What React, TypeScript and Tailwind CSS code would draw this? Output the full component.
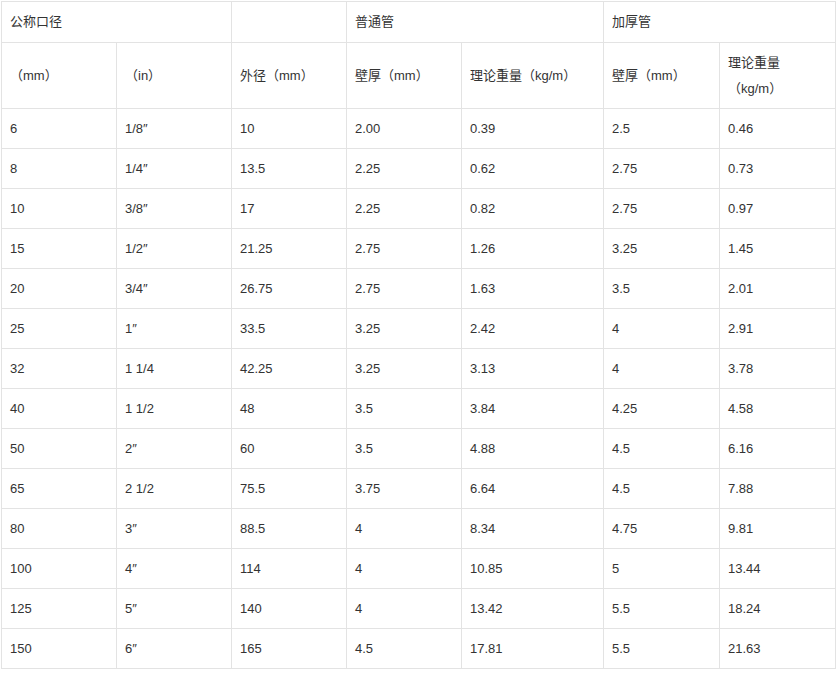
import React from 'react';

// ── Data ───────────────────────────────────────────────────────────────────────

const ROWS: string[][] = [
  ['6', '1/8″', '10', '2.00', '0.39', '2.5', '0.46'],
  ['8', '1/4″', '13.5', '2.25', '0.62', '2.75', '0.73'],
  ['10', '3/8″', '17', '2.25', '0.82', '2.75', '0.97'],
  ['15', '1/2″', '21.25', '2.75', '1.26', '3.25', '1.45'],
  ['20', '3/4″', '26.75', '2.75', '1.63', '3.5', '2.01'],
  ['25', '1″', '33.5', '3.25', '2.42', '4', '2.91'],
  ['32', '1 1/4', '42.25', '3.25', '3.13', '4', '3.78'],
  ['40', '1 1/2', '48', '3.5', '3.84', '4.25', '4.58'],
  ['50', '2″', '60', '3.5', '4.88', '4.5', '6.16'],
  ['65', '2 1/2', '75.5', '3.75', '6.64', '4.5', '7.88'],
  ['80', '3″', '88.5', '4', '8.34', '4.75', '9.81'],
  ['100', '4″', '114', '4', '10.85', '5', '13.44'],
  ['125', '5″', '140', '4', '13.42', '5.5', '18.24'],
  ['150', '6″', '165', '4.5', '17.81', '5.5', '21.63'],
];

const cell = 'border border-[#e3e3e3] px-[8px] py-0 align-middle text-left font-normal';

// ── App ────────────────────────────────────────────────────────────────────────

export default function App() {
  return (
    <div
      className="bg-white p-px text-[13px] leading-[26px] text-[#333]"
      style={{ fontFamily: '"Liberation Sans", Arial, "Noto Sans CJK SC", sans-serif' }}
    >
      <table className="table-fixed border-collapse w-[834px]">
        <colgroup>
          <col className="w-[115px]" />
          <col className="w-[115px]" />
          <col className="w-[115px]" />
          <col className="w-[115px]" />
          <col className="w-[142px]" />
          <col className="w-[116px]" />
          <col className="w-[116px]" />
        </colgroup>
        <thead>
          <tr className="h-[41px]">
            <th colSpan={2} className={cell}>公称口径</th>
            <th className={cell}></th>
            <th colSpan={2} className={cell}>普通管</th>
            <th colSpan={2} className={cell}>加厚管</th>
          </tr>
          <tr className="h-[66px]">
            <th className={cell}>（mm）</th>
            <th className={cell}>（in）</th>
            <th className={cell}>外径（mm）</th>
            <th className={cell}>壁厚（mm）</th>
            <th className={cell}>理论重量（kg/m）</th>
            <th className={cell}>壁厚（mm）</th>
            <th className={cell}>理论重量（kg/m）</th>
          </tr>
        </thead>
        <tbody>
          {ROWS.map((row) => (
            <tr key={row[0]} className="h-[40px]">
              {row.map((v, i) => (
                <td key={i} className={cell}>{v}</td>
              ))}
            </tr>
          ))}
        </tbody>
      </table>
    </div>
  );
}
